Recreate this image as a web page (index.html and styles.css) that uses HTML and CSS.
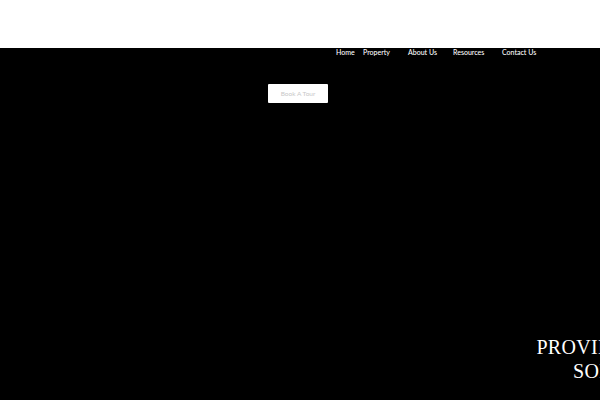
FILE: index.html
```html
<!DOCTYPE html>
<html>
<head>
<meta charset="utf-8">
<link rel="stylesheet" href="styles.css">
</head>
<body>
<div class="top"></div>
<main class="hero">
  <nav class="nav">
    <span class="nav-item home">Home</span>
    <span class="nav-item prop">Property</span>
    <span class="nav-item about">About Us</span>
    <span class="nav-item res">Resources</span>
    <span class="nav-item contact">Contact Us</span>
  </nav>
  <div class="cta-row"><span class="cta">Book A Tour</span></div>
  <h1 class="headline">PROVIDING SMART<br>SOLUTIONS</h1>
</main>
</body>
</html>
```
FILE: styles.css
```css
html, body { margin: 0; padding: 0; }
body { width: 600px; height: 400px; overflow: hidden; background: #fff; font-family: Lato, "Noto Sans", sans-serif; }
.top { height: 48px; background: #fff; }
.hero { height: 352px; background: #000; overflow: hidden; }
.nav { display: flex; padding-left: 336px; height: 9px; font-size: 7px; line-height: 9px; color: #fff; white-space: nowrap; font-weight: 500; }
.nav-item { color: #fff; }
.home { width: 27px; }
.prop { width: 45px; }
.about { width: 45px; }
.res { width: 49px; }
.cta-row { display: flex; padding-left: 268px; margin-top: 27px; }
.cta { display: flex; align-items: center; justify-content: center; width: 60px; height: 19px; background: #fff; border-radius: 1px; color: #c8c8c8; font-size: 6.5px; }
.headline { margin: 232px 0 0 0; width: 1260px; font-family: "Liberation Serif", serif; font-weight: normal; font-size: 20px; line-height: 24px; color: #fff; letter-spacing: 0.3px; white-space: nowrap; text-align: center; }
```
